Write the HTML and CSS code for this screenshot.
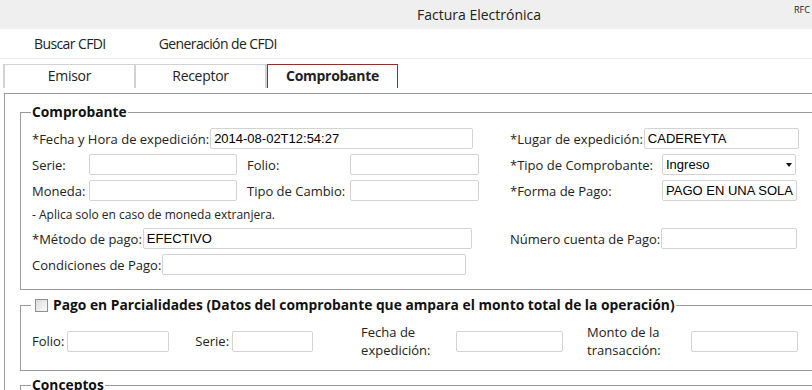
FILE: index.html
```html
<!DOCTYPE html>
<html lang="es">
<head>
  <meta charset="UTF-8" />
  <meta name="viewport" content="width=device-width, initial-scale=1.0"/>
  <title>Factura Electrónica</title>
  <link rel="stylesheet" href="styles.css">
</head>
<body>
  <div class="page">
    <header class="topbar">
      <span></span>
      <span class="title">Factura Electrónica</span>
      <span class="rfc">RFC</span>
    </header>

    <nav class="menu">
      <a href="#">Buscar CFDI</a>
      <a href="#">Generación de CFDI</a>
    </nav>

    <div class="tabs">
      <div class="tab">Emisor</div>
      <div class="tab">Receptor</div>
      <div class="tab active">Comprobante</div>
    </div>

    <div class="panel">
      <fieldset class="group comprobante">
        <legend>Comprobante</legend>
        <div class="grid">
          <div class="row">
            <label>*Fecha y Hora de expedición:</label>
            <input type="text" class="w-fecha" value="2014-08-02T12:54:27">
          </div>
          <div class="row">
            <label>*Lugar de expedición:</label>
            <input type="text" class="w-lugar" value="CADEREYTA">
          </div>

          <div class="row">
            <label class="lbl-s">Serie:</label>
            <input type="text" class="w-148">
            <label class="lbl-m">Folio:</label>
            <input type="text" class="w-129">
          </div>
          <div class="row">
            <label class="lbl-l">*Tipo de Comprobante:</label>
            <div class="select">
              <select>
                <option>Ingreso</option>
                <option>Egreso</option>
                <option>Traslado</option>
              </select>
            </div>
          </div>

          <div class="row">
            <label class="lbl-s">Moneda:</label>
            <input type="text" class="w-148">
            <label class="lbl-m">Tipo de Cambio:</label>
            <input type="text" class="w-129">
          </div>
          <div class="row">
            <label class="lbl-l">*Forma de Pago:</label>
            <input type="text" class="w-135" value="PAGO EN UNA SOLA EXHIBICION">
          </div>

          <div class="row note">- Aplica solo en caso de moneda extranjera.</div>
          <div class="row note"></div>

          <div class="row">
            <label>*Método de pago:</label>
            <input type="text" class="w-metodo" value="EFECTIVO">
          </div>
          <div class="row">
            <label>Número cuenta de Pago:</label>
            <input type="text" class="w-136">
          </div>

          <div class="row">
            <label>Condiciones de Pago:</label>
            <input type="text" class="w-cond">
          </div>
          <div class="row"></div>
        </div>
      </fieldset>

      <fieldset class="group parcialidades">
        <legend><input type="checkbox" class="check"> Pago en Parcialidades (Datos del comprobante que ampara el monto total de la operación)</legend>
        <div class="row tall">
          <label>Folio:</label>
          <input type="text" class="w-102">
          <label class="gap-serie">Serie:</label>
          <input type="text" class="w-81">
          <label class="two-line lbl-fecha">Fecha de<br>expedición:</label>
          <input type="text" class="w-107">
          <label class="two-line lbl-monto">Monto de la<br>transacción:</label>
          <input type="text" class="w-107">
        </div>
      </fieldset>

      <fieldset class="group conceptos">
        <legend>Conceptos</legend>
        <div class="row"></div>
      </fieldset>
    </div>
  </div>
</body>
</html>
```

FILE: styles.css
```css
* {
  box-sizing: border-box;
}

html, body {
  margin: 0;
  overflow: hidden;
}

body {
  font-family: 'Open Sans', 'Noto Sans', sans-serif;
  font-size: 13px;
  color: #222;
  background: #fff;
}

.page {
  width: 958px;
  height: 390px;
  overflow: hidden;
}

/* header */
.topbar {
  height: 29px;
  background: #efefef;
  display: grid;
  grid-template-columns: 1fr auto 1fr;
  align-items: center;
}

.title {
  font-size: 14px;
  color: #222;
}

.rfc {
  align-self: start;
  margin-top: 3px;
  margin-left: 253px;
  font-size: 9px;
  color: #222;
}

.menu {
  height: 30px;
  border-bottom: 1px solid #ebebeb;
  display: flex;
  align-items: center;
  padding-left: 34px;
  gap: 53px;
}

.menu a {
  font-size: 14px;
  color: #222;
  text-decoration: none;
  letter-spacing: -0.6px;
}

/* tabs */
.tabs {
  display: flex;
  margin-top: 5px;
  padding-left: 3px;
}

.tab {
  width: 133px;
  height: 24px;
  border: 2px solid #d2d2d2;
  border-width: 1px 2px 0 2px;
  margin-right: -2px;
  text-align: center;
  line-height: 22px;
  font-size: 14px;
  letter-spacing: -0.3px;
}

.tab.active {
  border: 1px solid #c8161d;
  border-bottom: none;
  margin-left: 2px;
  width: 131px;
  font-weight: bold;
}

/* panel */
.panel {
  margin: 5px 0 0 4px;
  border-top: 1px solid #9a9a9a;
  border-left: 1px solid #9a9a9a;
  padding: 9px 0 0 15px;
}

.group {
  margin: 0;
  border: 1px solid #9a9a9a;
  padding: 7px 0 14px 11px;
  min-width: 0;
}

.group legend {
  font-weight: bold;
  font-size: 13.8px;
  padding: 0 1px;
  margin-left: -1px;
  line-height: 18px;
  color: #111;
}

.grid {
  display: grid;
  grid-template-columns: 478px 1fr;
  row-gap: 5px;
}

.row {
  display: flex;
  align-items: center;
  height: 21px;
  white-space: nowrap;
}

.row label {
  margin-right: 1px;
}

.row.note {
  height: 17px;
  font-size: 12px;
}

input[type="text"] {
  height: 21px;
  border: 1px solid #d3d3d3;
  border-radius: 2px;
  padding: 0 3px;
  font-family: 'Liberation Sans', Arial, sans-serif;
  font-size: 13px;
  color: #000;
  background: #fff;
}

.lbl-s { width: 56px; }
.lbl-m { width: 102px; margin-left: 10px; }
.lbl-l { width: 151px; }

.w-fecha { width: 263px; }
.w-lugar { width: 155px; }
.w-148 { width: 148px; }
.w-129 { width: 129px; }
.w-135 { width: 135px; }
.w-136 { width: 136px; }
.w-metodo { width: 329px; }
.w-cond { width: 304px; }
.w-102 { width: 102px; }
.w-81 { width: 81px; }
.w-107 { width: 107px; }

.select {
  position: relative;
  width: 134px;
  height: 21px;
}

.select select {
  appearance: none;
  -webkit-appearance: none;
  width: 100%;
  height: 21px;
  border: 1px solid #d3d3d3;
  border-radius: 2px;
  padding: 0 3px;
  font-family: 'Liberation Sans', Arial, sans-serif;
  font-size: 13px;
  color: #000;
  background: #fff;
}

.select::after {
  content: "";
  position: absolute;
  right: 4px;
  top: 9px;
  border-left: 3.5px solid transparent;
  border-right: 3.5px solid transparent;
  border-top: 4px solid #111;
}

/* parcialidades */
.parcialidades {
  margin-top: 6px;
  padding-top: 9px;
  padding-bottom: 11px;
}

.parcialidades legend {
  display: flex;
  align-items: center;
  gap: 5px;
  padding-left: 4px;
}

.parcialidades .row label {
  margin-right: 3px;
}

.check {
  appearance: none;
  -webkit-appearance: none;
  width: 13px;
  height: 13px;
  margin: 0;
  border: 1px solid #8e8e8e;
  background: linear-gradient(135deg, #dcdcdc, #fbfbfb);
}

.row.tall {
  height: 36px;
}

.gap-serie { margin-left: 26px; }
.two-line { line-height: 18px; }
.lbl-fecha { width: 92px; margin-left: 48px; }
.lbl-monto { width: 101px; margin-left: 24px; }

.conceptos {
  margin-top: 5px;
  padding-bottom: 20px;
}
```
